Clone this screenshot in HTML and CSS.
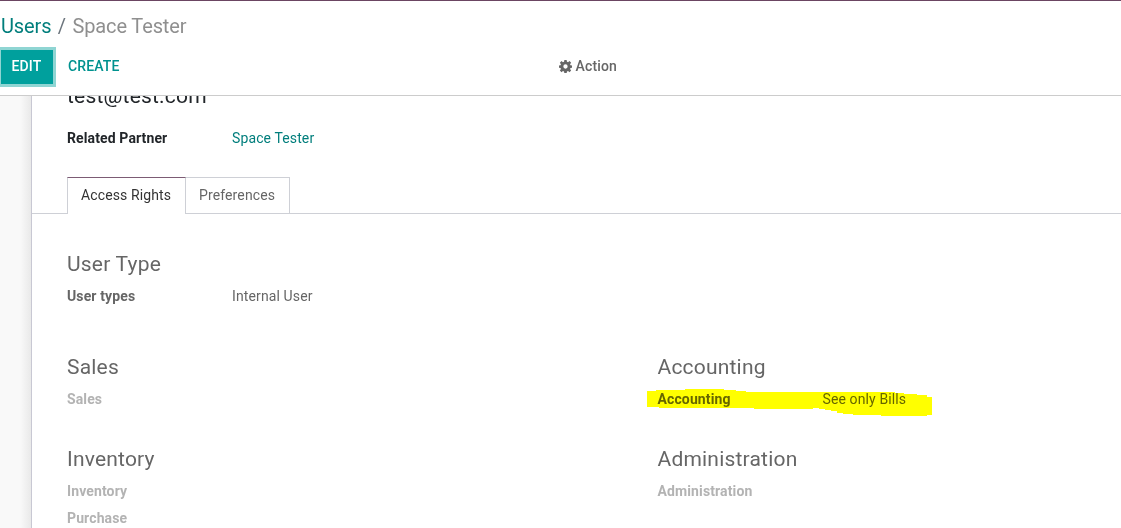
FILE: index.html
```html
<!DOCTYPE html>
<html>
	<head>
		<meta charset="UTF-8">
		<title>Space Tester</title>
		<link rel="stylesheet" href="styles.css">
	</head>
	<body>
		<div class="control-panel">
			<div class="breadcrumb">
				<a href="#">Users</a><span class="slash">/</span><span class="current">Space Tester</span>
			</div>
			<div class="toolbar">
				<button class="btn btn-primary">EDIT</button>
				<button class="btn btn-link">CREATE</button>
				<button class="btn btn-action">
					<svg class="gear" viewBox="0 0 24 24"><path fill-rule="evenodd" d="M9.900 0h4.200l.6 3.200 2 .8L19.400 2l3 3-2 2.700.8 1.900 3.300.5v4.100l-3.300.6-.8 2 2 2.700-3 3-2.700-2-2 .8-.6 3.200H9.900l-.6-3.200-2-.8-2.700 2-3-3 2-2.700-.8-2-3.200-.6v-4.100l3.200-.5.8-1.900-2-2.700 3-3L7.300 4l2-.8zM12 8a4 4 0 1 0 0 8 4 4 0 0 0 0-8z"/></svg>
					<span>Action</span>
				</button>
			</div>
		</div>
		<div class="content">
			<div class="sheet">
				<div class="email">test@test.com</div>
				<div class="row partner">
					<span class="label">Related Partner</span>
					<a href="#">Space Tester</a>
				</div>
				<ul class="tabs">
					<li class="on">Access Rights</li>
					<li>Preferences</li>
				</ul>
				<div class="groups">
					<div class="group wide">
						<h2>User Type</h2>
						<div class="row"><span class="label">User types</span><span>Internal User</span></div>
					</div>
					<div class="group">
						<h2>Sales</h2>
						<div class="row empty"><span class="label">Sales</span></div>
					</div>
					<div class="group">
						<h2>Accounting</h2>
						<div class="row marked">
							<span class="label">Accounting</span><span>See only Bills</span>
							<svg class="marker" viewBox="0 0 285 27"><path d="M0 2H9V1H38V0H77V1H89V2H99V3H248V4H257V5H270V6H280V8H285V26H280V27H234V26H206V25H196V24H190V22H184V21H178V20H172V19H166V20H107V19H12V18H0Z"/></svg>
						</div>
					</div>
					<div class="group">
						<h2>Inventory</h2>
						<div class="row empty"><span class="label">Inventory</span></div>
						<div class="row empty"><span class="label">Purchase</span></div>
					</div>
					<div class="group">
						<h2>Administration</h2>
						<div class="row empty"><span class="label">Administration</span></div>
					</div>
				</div>
			</div>
		</div>
	</body>
</html>
```
FILE: styles.css
```css
*{margin: 0;padding: 0;box-sizing: border-box;}
body{height: 528px;overflow: hidden;display: flex;flex-direction: column;
font: 14px/21px Roboto, sans-serif;letter-spacing: .12px;color: #666;background: #fff;}
a{color: #017e7c;text-decoration: none;}
ul{list-style: none;}

.control-panel{height: 96px;flex: none;border-top: 1px solid #6b4562;border-bottom: 1px solid #ccc;}
.breadcrumb{padding: 10px 0 0 1px;font-size: 20px;line-height: 30px;letter-spacing: -.13px;}
.slash{padding: 0 6.5px;color: #6c757d;}
.current{color: #8f8f8f;}
.toolbar{display: flex;align-items: center;margin-top: 9px;padding-left: 1px;}
.btn{height: 34px;padding-bottom: 2px;border: 0;background: none;font: 500 14px/21px Roboto, sans-serif;letter-spacing: .14px;}
.btn-primary{width: 52px;padding-right: 1px;background: #00a09d;color: #fff;box-shadow: 0 0 0 3px #8fd5d3;}
.btn-link{margin-left: 15px;color: #00928f;}
.btn-action{display: flex;align-items: center;margin-left: 439px;color: #666;}
.gear{width: 13px;height: 13px;margin-right: 4px;fill: #666;}

.content{flex: 1;overflow: hidden;padding-left: 31px;background: linear-gradient(to right, #f9f9f9 20px, #e9e9e9 31px);}
.sheet{height: 460px;border-left: 1px solid #c8c8d3;background: #fff;}
.email{height: 31px;margin-top: -15px;padding-left: 35px;font-size: 21px;line-height: 31px;letter-spacing: .2px;color: #212529;}
.row{display: flex;height: 27px;line-height: 27px;}
.label{width: 165px;font-weight: 700;}
.partner{margin-top: 13px;padding-left: 35px;}
.partner .label{color: #212529;}
.tabs{display: flex;height: 37px;margin-top: 25px;padding-left: 35px;border-bottom: 1px solid #ced0d6;}
.tabs li{height: 36px;width: 104px;padding-left: 13px;border: 1px solid #ced0d6;border-left: 0;border-bottom: 0;line-height: 35px;}
.tabs .on{height: 37px;width: 119px;border-left: 1px solid #ced0d6;border-top-color: #7c5b74;background: #fff;color: #333;}

.groups{display: grid;grid-template-columns: 590.5px 1fr;padding: 34px 0 0 35px;}
.group{min-height: 92px;}
.wide{grid-column: 1 / 3;height: 103px;}
.group h2{height: 35px;font-size: 21px;font-weight: 400;line-height: 33px;letter-spacing: .2px;}
.empty{color: #b3b3b3;}
.marked{position: relative;}
.marker{position: absolute;left: -10.5px;top: 3px;width: 285px;height: 27px;fill: #ff0;mix-blend-mode: multiply;}
```
